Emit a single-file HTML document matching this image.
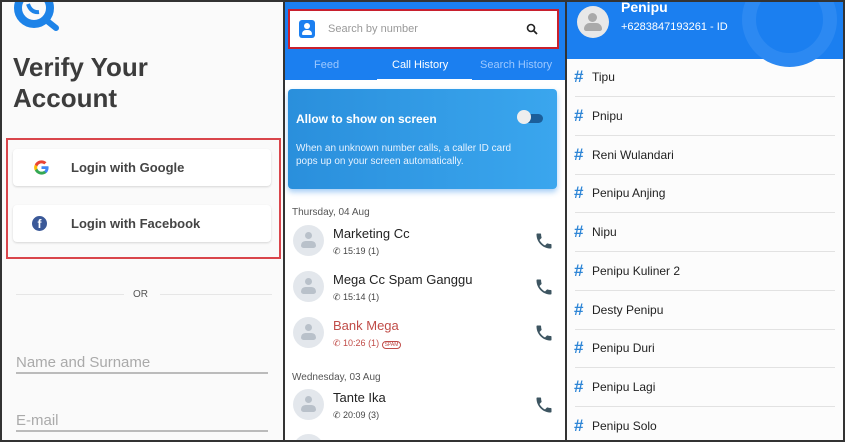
<!DOCTYPE html>
<html><head><meta charset="utf-8"><style>
*{margin:0;padding:0;box-sizing:border-box}
body{width:845px;height:442px;overflow:hidden;background:#333;font-family:"Liberation Sans",sans-serif;position:relative}
.p{position:absolute;overflow:hidden}
.abs{position:absolute}
.btn{position:absolute;left:13px;width:258px;height:37px;background:#fff;border-radius:4px;box-shadow:0 1px 2px rgba(0,0,0,.15);font-weight:bold;font-size:13px;color:#444}
.btn span{position:absolute;left:58px;top:11px}
.row{position:absolute;left:0;width:100%;height:39px}
.row .h{position:absolute;left:7px;top:9px;color:#2f86d6;font-weight:bold;font-size:17px}
.row .t{position:absolute;left:25px;top:12px;font-size:12px;color:#222}
.row .d{position:absolute;left:8px;right:8px;top:38px;height:1px;background:#e2e2e2}
.av{position:absolute;left:8px;width:31px;height:31px;border-radius:50%;background:#e3e7ec}
.av:before{content:"";position:absolute;left:12px;top:7px;width:7px;height:7px;border-radius:50%;background:#b9c1ca}
.av:after{content:"";position:absolute;left:8px;top:16px;width:15px;height:7px;border-radius:7px 7px 4px 4px;background:#b9c1ca}
.nm{position:absolute;left:48px;font-size:13px;color:#222}
.sb{position:absolute;left:48px;font-size:9px;color:#444}
.ph{position:absolute;left:249px}
</style></head><body>
<svg width="0" height="0" style="position:absolute"><defs><symbol id="phone" viewBox="0 0 24 24"><path d="M6.6 10.8c1.4 2.8 3.8 5.1 6.6 6.6l2.2-2.2c.3-.3.7-.4 1-.2 1.1.4 2.3.6 3.6.6.6 0 1 .4 1 1V20c0 .6-.4 1-1 1C10.6 21 3 13.4 3 4c0-.6.4-1 1-1h3.5c.6 0 1 .4 1 1 0 1.3.2 2.5.6 3.6.1.3 0 .7-.2 1L6.6 10.8z" fill="#3d5561"/></symbol></defs></svg>
<!-- left -->
<div class="p" style="left:2px;top:2px;width:281px;height:438px;background:#fafafa">
 <svg class="abs" style="left:10px;top:-12px" width="52" height="46" viewBox="0 0 52 46"><circle cx="22" cy="18" r="16" fill="none" stroke="#1d83e8" stroke-width="8"/><line x1="34" y1="30" x2="44" y2="38" stroke="#1d83e8" stroke-width="6" stroke-linecap="round"/><path d="M16 14q3 9 11 8" stroke="#1d83e8" stroke-width="4" fill="none"/></svg>
 <div class="abs" style="left:11px;top:50px;font-size:26px;font-weight:bold;color:#3c3c3c;line-height:31px">Verify Your<br>Account</div>
 <div class="abs" style="left:4px;top:136px;width:275px;height:121px;border:2px solid #d9454b"></div>
 <div class="btn" style="left:11px;top:147px"><svg class="abs" style="left:20px;top:10px" width="17" height="17" viewBox="0 0 24 24"><path d="M22 12.2c0-.7-.1-1.4-.2-2H12v3.9h5.6c-.3 1.3-1 2.4-2.1 3.1v2.6h3.4c2-1.8 3.1-4.5 3.1-7.6z" fill="#4285f4"/><path d="M12 22c2.8 0 5.2-.9 6.9-2.5l-3.4-2.6c-.9.6-2.1 1-3.5 1-2.7 0-5-1.8-5.8-4.3H2.7v2.7C4.4 19.7 7.9 22 12 22z" fill="#34a853"/><path d="M6.2 13.6c-.2-.6-.3-1.2-.3-1.6s.1-1.1.3-1.6V7.7H2.7C2 9 1.6 10.5 1.6 12s.4 3 1.1 4.3l3.5-2.7z" fill="#fbbc05"/><path d="M12 6.1c1.5 0 2.9.5 4 1.5l3-3C17.2 3 14.8 2 12 2 7.9 2 4.4 4.3 2.7 7.7l3.5 2.7C7 7.9 9.3 6.1 12 6.1z" fill="#ea4335"/></svg><span>Login with Google</span></div>
 <div class="btn" style="left:11px;top:203px"><span style="left:19px;top:11px;width:15px;height:15px;border-radius:50%;background:#3b5998;color:#fff;font-size:12px;text-align:center;line-height:17px">f</span><span>Login with Facebook</span></div>
 <div class="abs" style="left:14px;top:292px;width:108px;height:1px;background:#e6e6e6"></div>
 <div class="abs" style="left:158px;top:292px;width:112px;height:1px;background:#e6e6e6"></div>
 <div class="abs" style="left:131px;top:287px;font-size:10px;color:#555">OR</div>
 <div class="abs" style="left:14px;top:352px;font-size:15px;color:#aaa">Name and Surname</div>
 <div class="abs" style="left:14px;top:370px;width:252px;height:2px;background:#bbb"></div>
 <div class="abs" style="left:14px;top:410px;font-size:15px;color:#aaa">E-mail</div>
 <div class="abs" style="left:14px;top:428px;width:252px;height:2px;background:#bbb"></div>
</div>
<!-- middle -->
<div class="p" style="left:285px;top:2px;width:280px;height:438px;background:#fff">
 <div class="abs" style="left:0;top:0;width:280px;height:78px;background:#1b7ff0"></div>
 <div class="abs" style="left:3px;top:7px;width:271px;height:40px;background:#fff;border:2px solid #c8202e"></div>
 <div class="abs" style="left:14px;top:18px;width:16px;height:18px;border-radius:3px;background:#1b7ff0"></div>
 <div class="abs" style="left:19px;top:21px;width:6px;height:6px;border-radius:50%;background:#fff"></div>
 <div class="abs" style="left:17px;top:28px;width:10px;height:5px;border-radius:4px 4px 1px 1px;background:#fff"></div>
 <div class="abs" style="left:43px;top:21px;font-size:11px;color:#999">Search by number</div>
 <svg class="abs" style="left:241px;top:21px" width="12" height="12" viewBox="0 0 12 12"><circle cx="5" cy="5" r="3.5" fill="none" stroke="#222" stroke-width="1.6"/><line x1="7.5" y1="7.5" x2="11" y2="11" stroke="#222" stroke-width="1.8"/></svg>
 <div class="abs" style="left:29px;top:57px;font-size:11px;color:#9cc8ff">Feed</div>
 <div class="abs" style="left:107px;top:57px;font-size:11px;color:#fff">Call History</div>
 <div class="abs" style="left:195px;top:57px;font-size:11px;color:#9cc8ff">Search History</div>
 <div class="abs" style="left:92px;top:77px;width:95px;height:2px;background:#fff"></div>
 <div class="abs" style="left:3px;top:87px;width:269px;height:100px;border-radius:4px;background:linear-gradient(90deg,#2a8fdc,#3aa6ee);box-shadow:0 3px 6px rgba(30,130,230,.4)"></div>
 <div class="abs" style="left:11px;top:110px;font-size:12px;font-weight:bold;color:#fff">Allow to show on screen</div>
 <div class="abs" style="left:234px;top:112px;width:24px;height:9px;border-radius:5px;background:#1b5e9a"></div>
 <div class="abs" style="left:232px;top:108px;width:14px;height:14px;border-radius:50%;background:#eee"></div>
 <div class="abs" style="left:11px;top:140px;font-size:10px;color:#e6f2ff;line-height:13px">When an unknown number calls, a caller ID card<br>pops up on your screen automatically.</div>
 <div class="abs" style="left:7px;top:205px;font-size:10px;color:#555">Thursday, 04 Aug</div>
 <div class="av" style="top:223px"></div><div class="nm" style="top:224px">Marketing Cc</div><div class="sb" style="top:244px">&#9990; 15:19 (1)</div><svg class="ph" style="top:229px" width="20" height="20"><use href="#phone"/></svg>
 <div class="av" style="top:269px"></div><div class="nm" style="top:270px">Mega Cc Spam Ganggu</div><div class="sb" style="top:290px">&#9990; 15:14 (1)</div><svg class="ph" style="top:275px" width="20" height="20"><use href="#phone"/></svg>
 <div class="av" style="top:315px"></div><div class="nm" style="top:316px;color:#c04c48">Bank Mega</div><div class="sb" style="top:336px;color:#c04c48">&#9990; 10:26 (1) <span style="border:1px solid #c04c48;border-radius:5px;font-size:5px;padding:0 2px">SPAM</span></div><svg class="ph" style="top:321px" width="20" height="20"><use href="#phone"/></svg>
 <div class="abs" style="left:7px;top:370px;font-size:10px;color:#555">Wednesday, 03 Aug</div>
 <div class="av" style="top:387px"></div><div class="nm" style="top:388px">Tante Ika</div><div class="sb" style="top:408px">&#9990; 20:09 (3)</div><svg class="ph" style="top:393px" width="20" height="20"><use href="#phone"/></svg>
 <div class="av" style="top:432px"></div>
</div>
<!-- right -->
<div class="p" style="left:567px;top:2px;width:276px;height:438px;background:#fcfcfc">
 <div class="abs" style="left:0;top:0;width:276px;height:57px;background:#1b7ff0"></div>
 <div class="abs" style="left:175px;top:-30px;width:95px;height:95px;border-radius:50%;border:14px solid #2c89f2"></div>
 <div class="abs" style="left:10px;top:4px;width:32px;height:32px;border-radius:50%;background:#e8e8e8"></div>
 <div class="abs" style="left:21px;top:11px;width:9px;height:9px;border-radius:50%;background:#aaa"></div>
 <div class="abs" style="left:17px;top:21px;width:18px;height:8px;border-radius:8px 8px 3px 3px;background:#aaa"></div>
 <div class="abs" style="left:54px;top:-3px;font-size:14px;font-weight:bold;color:#fff">Penipu</div>
 <div class="abs" style="left:54px;top:19px;font-size:11px;color:#fff">+6283847193261 - ID</div>
 <div class="row" style="top:56px"><span class="h">#</span><span class="t">Tipu</span><span class="d"></span></div>
 <div class="row" style="top:95px"><span class="h">#</span><span class="t">Pnipu</span><span class="d"></span></div>
 <div class="row" style="top:134px"><span class="h">#</span><span class="t">Reni Wulandari</span><span class="d"></span></div>
 <div class="row" style="top:172px"><span class="h">#</span><span class="t">Penipu Anjing</span><span class="d"></span></div>
 <div class="row" style="top:211px"><span class="h">#</span><span class="t">Nipu</span><span class="d"></span></div>
 <div class="row" style="top:250px"><span class="h">#</span><span class="t">Penipu Kuliner 2</span><span class="d"></span></div>
 <div class="row" style="top:289px"><span class="h">#</span><span class="t">Desty Penipu</span><span class="d"></span></div>
 <div class="row" style="top:327px"><span class="h">#</span><span class="t">Penipu Duri</span><span class="d"></span></div>
 <div class="row" style="top:366px"><span class="h">#</span><span class="t">Penipu Lagi</span><span class="d"></span></div>
 <div class="row" style="top:405px"><span class="h">#</span><span class="t">Penipu Solo</span></div>
</div>
</body></html>
